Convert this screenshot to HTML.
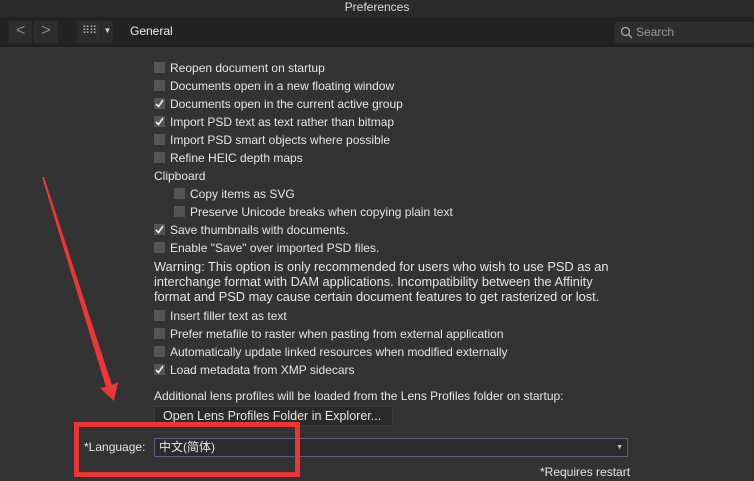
<!DOCTYPE html>
<html><head><meta charset="utf-8"><style>
*{margin:0;padding:0;box-sizing:border-box}
body{width:754px;height:481px;overflow:hidden;background:#333;font-family:"Liberation Sans","Noto Sans CJK SC",sans-serif;color:#e6e6e6;position:relative;font-size:12px}
.title{position:absolute;left:0;top:0;width:754px;height:17px;background:#2a2a2a;text-align:center;font-size:12px;line-height:15px;color:#ddd}
.tb{position:absolute;left:0;top:17px;width:754px;height:30px;background:#232323;border-bottom:1px solid #1d1d1d}
.btn{position:absolute;top:4px;height:22px;background:#2c2c2c;color:#888;text-align:center;line-height:20px;font-size:16px}
.row{position:absolute;left:154px;height:18px;line-height:18px;white-space:nowrap;font-size:12px}
.cb{display:inline-block;width:11px;height:11px;background:#555;vertical-align:-1px;margin-right:5px;position:relative}
.cb svg{position:absolute;left:1px;top:1px}
.t{position:absolute;left:154px;white-space:nowrap;font-size:12px;line-height:18px}
</style></head><body>
<div class="title">Preferences</div>
<div class="tb">
<div class="btn" style="left:9px;width:23px">&lt;</div>
<div class="btn" style="left:34px;width:24px">&gt;</div>
<div class="btn" style="left:77px;width:24px;font-size:11px;letter-spacing:-1px;color:#aaa">⠿⠿</div>
<div class="btn" style="left:102px;width:11px;font-size:8px;color:#ccc">▼</div>
<div style="position:absolute;left:130px;top:7px;font-size:12px;color:#eee">General</div>
<div style="position:absolute;left:615px;top:5px;width:139px;height:21px;background:#2e2e2e;color:#999;font-size:12px;line-height:21px;padding-left:21px">Search
<svg style="position:absolute;left:5px;top:4px" width="13" height="13" viewBox="0 0 13 13"><circle cx="5.5" cy="5.5" r="4" fill="none" stroke="#aaa" stroke-width="1.3"/><path d="M8.5 8.5L12 12" stroke="#aaa" stroke-width="1.4"/></svg></div>
</div>

<div class="row" style="top:59px"><span class="cb"></span>Reopen document on startup</div>
<div class="row" style="top:77px"><span class="cb"></span>Documents open in a new floating window</div>
<div class="row" style="top:95px"><span class="cb"><svg width="9" height="9"><path d="M1 5L3.5 7.5L8 1" fill="none" stroke="#eee" stroke-width="1.6"/></svg></span>Documents open in the current active group</div>
<div class="row" style="top:113px"><span class="cb"><svg width="9" height="9"><path d="M1 5L3.5 7.5L8 1" fill="none" stroke="#eee" stroke-width="1.6"/></svg></span>Import PSD text as text rather than bitmap</div>
<div class="row" style="top:131px"><span class="cb"></span>Import PSD smart objects where possible</div>
<div class="row" style="top:149px"><span class="cb"></span>Refine HEIC depth maps</div>
<div class="t" style="top:167px">Clipboard</div>
<div class="row" style="top:185px;left:174px"><span class="cb"></span>Copy items as SVG</div>
<div class="row" style="top:203px;left:174px"><span class="cb"></span>Preserve Unicode breaks when copying plain text</div>
<div class="row" style="top:221px"><span class="cb"><svg width="9" height="9"><path d="M1 5L3.5 7.5L8 1" fill="none" stroke="#eee" stroke-width="1.6"/></svg></span>Save thumbnails with documents.</div>
<div class="row" style="top:239px"><span class="cb"></span>Enable "Save" over imported PSD files.</div>
<div class="t" style="top:259px;font-size:12.8px;line-height:15px">Warning: This option is only recommended for users who wish to use PSD as an<br>interchange format with DAM applications. Incompatibility between the Affinity<br>format and PSD may cause certain document features to get rasterized or lost.</div>
<div class="row" style="top:307px"><span class="cb"></span>Insert filler text as text</div>
<div class="row" style="top:325px"><span class="cb"></span>Prefer metafile to raster when pasting from external application</div>
<div class="row" style="top:343px"><span class="cb"></span>Automatically update linked resources when modified externally</div>
<div class="row" style="top:361px"><span class="cb"><svg width="9" height="9"><path d="M1 5L3.5 7.5L8 1" fill="none" stroke="#eee" stroke-width="1.6"/></svg></span>Load metadata from XMP sidecars</div>
<div class="t" style="top:387px">Additional lens profiles will be loaded from the Lens Profiles folder on startup:</div>
<div style="position:absolute;left:154px;top:406px;width:239px;height:20px;background:#2a2a2a;border:1px solid #3c3c3c;line-height:19px;padding-left:8px;font-size:12.5px;overflow:hidden">Open Lens Profiles Folder in Explorer...</div>
<div class="t" style="left:84px;top:438px">*Language:</div>
<div style="position:absolute;left:154px;top:438px;width:474px;height:19px;background:#2b2b2b;border:1px solid #5a5f8a;line-height:17px;padding-left:4px;font-size:12px">中文(简体)<span style="position:absolute;right:4px;font-size:7px;color:#ccc">▼</span></div>
<div class="t" style="left:540px;top:463px;font-size:12px">*Requires restart</div>

<div style="position:absolute;left:74px;top:422px;width:226px;height:55px;border:5px solid #ee3535"></div>
<svg style="position:absolute;left:0;top:0" width="754" height="481"><polygon points="42,177 44,177 112,385 118,382 114,401 100,388 106,387" fill="#f03535"/></svg>
</body></html>
